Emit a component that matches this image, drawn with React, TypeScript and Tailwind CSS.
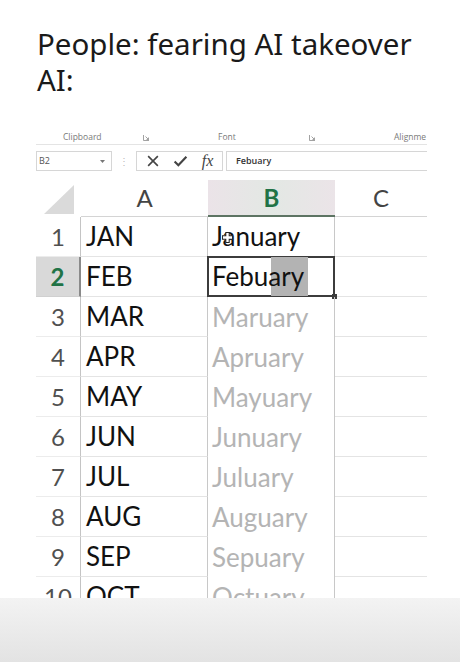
import React from "react";

const months = [
  { a: "JAN", b: "January" },
  { a: "FEB", b: "Febuary" },
  { a: "MAR", b: "Maruary" },
  { a: "APR", b: "Apruary" },
  { a: "MAY", b: "Mayuary" },
  { a: "JUN", b: "Junuary" },
  { a: "JUL", b: "Juluary" },
  { a: "AUG", b: "Auguary" },
  { a: "SEP", b: "Sepuary" },
  { a: "OCT", b: "Octuary" },
];

const cellFont = { fontFamily: "Lato, 'Open Sans', sans-serif" };

function Launcher() {
  return (
    <svg width="7" height="7" viewBox="0 0 7 7" className="text-[#8a8a8a]">
      <path d="M0.5 1v5.5H6" fill="none" stroke="currentColor" strokeWidth="0.8" />
      <path d="M2.5 2.5l3 3M5.5 3.5v2h-2" fill="none" stroke="currentColor" strokeWidth="0.8" />
    </svg>
  );
}

function Ribbon() {
  return (
    <div className="flex flex-col text-[#7a7a7a]" style={{ fontFamily: "'Open Sans', sans-serif" }}>
      <div className="relative h-[14px] border-b border-[#e4e4e4] text-[8.5px] leading-[12px]">
        <span className="absolute left-[27px] top-0">Clipboard</span>
        <span className="absolute left-[107px] top-[3px]"><Launcher /></span>
        <span className="absolute left-[182px] top-0">Font</span>
        <span className="absolute left-[273px] top-[3px]"><Launcher /></span>
        <span className="absolute left-[358px] top-0">Alignme</span>
      </div>
      <div className="mt-[6px] flex h-[20px] items-stretch">
        <div className="flex w-[76px] items-center justify-between border border-[#d6d6d6] pl-[2px] pr-[6px] text-[9px] text-[#555]">
          <span>B2</span>
          <svg width="5" height="3" viewBox="0 0 5 3"><path d="M0 0h5L2.5 3z" fill="#777" /></svg>
        </div>
        <div className="flex w-[24px] items-center justify-center text-[10px] leading-none text-[#bbb]">⋮</div>
        <div className="flex w-[87px] items-center justify-around border border-[#d6d6d6] px-[2px] text-[#444]">
          <svg width="14" height="14" viewBox="0 0 13 13">
            <path d="M2 2l9 9M11 2l-9 9" stroke="currentColor" strokeWidth="1.5" />
          </svg>
          <svg width="15" height="14" viewBox="0 0 14 13">
            <path d="M1.5 7l3.5 3.5L12.5 2.5" fill="none" stroke="currentColor" strokeWidth="2" />
          </svg>
          <span className="text-[16px] italic leading-none" style={{ fontFamily: "'Liberation Serif', serif" }}>
            fx
          </span>
        </div>
        <div className="ml-[3px] flex flex-1 items-center border border-r-0 border-[#d6d6d6] pl-[9px] text-[9px] font-semibold text-[#333]">
          Febuary
        </div>
      </div>
    </div>
  );
}

function HeaderRow() {
  return (
    <div className="flex h-[37px]">
      <div className="flex w-[45px] items-start justify-center pt-[5px]">
        <svg width="30" height="29" viewBox="0 0 30 29">
          <path d="M30 0v29H0z" fill="#dadada" />
        </svg>
      </div>
      <div
        className="flex w-[127px] items-center justify-center border-b border-[#d4d4d4] text-[24px] text-[#444]"
        style={cellFont}
      >
        A
      </div>
      <div
        className="flex w-[127px] items-center justify-center border-b-2 border-[#5d7463] bg-gradient-to-r from-[#ebe3e8] via-[#e3e8e4] to-[#ebe4e8] text-[24px] font-bold text-[#217346]"
        style={cellFont}
      >
        B
      </div>
      <div
        className="flex w-[92px] items-center justify-center border-b border-[#d4d4d4] text-[24px] text-[#444]"
        style={cellFont}
      >
        C
      </div>
    </div>
  );
}

function SheetRow({ n, a, b }: { n: number; a: string; b: string }) {
  const selected = n === 2;
  const filled = n <= 2;
  return (
    <div className="flex h-[40px] shrink-0">
      <div
        className={`flex w-[45px] items-center justify-center border-b border-r ${
          selected
            ? "border-b-[#d0d0d0] border-r-[#8a8a8a] border-r-2 bg-[#d9d9d9] font-bold text-[#217346]"
            : "border-b-[#ececec] border-r-[#c4c4c4] text-[#505050]"
        } text-[24px]`}
        style={cellFont}
      >
        {n}
      </div>
      <div
        className="flex w-[127px] items-center border-b border-r border-b-[#e4e4e4] border-r-[#c8c8c8] pl-[5px] text-[26px] text-[#111]"
        style={cellFont}
      >
        {a}
      </div>
      <div
        className={`relative flex w-[127px] items-center border-r border-r-[#c8c8c8] pl-[4px] text-[26px] ${
          filled ? "border-b border-b-[#e4e4e4] text-[#111]" : "text-[#b4b4b4]"
        }`}
        style={cellFont}
      >
        {selected ? (
          <>
            <span className="absolute inset-x-[-1px] inset-y-[-1px] border-2 border-[#3c3c3c]" />
            <span className="absolute left-[63px] top-0 h-full w-[37px] bg-[#b3b3b3]" />
            <span className="relative">{b}</span>
            <span className="absolute -bottom-[3px] -right-[3px] h-[5px] w-[5px] bg-[#3c3c3c]" />
          </>
        ) : (
          <span className="relative">{b}</span>
        )}
        {n === 1 && (
          /* fat-cross selection cursor */
          <svg className="absolute left-[14px] top-[15px]" width="11" height="11" viewBox="0 0 13 13">
            <path
              d="M4.5 0.5h4v4h4v4h-4v4h-4v-4h-4v-4h4z"
              fill="#fff"
              stroke="#222"
              strokeWidth="1.2"
            />
          </svg>
        )}
      </div>
      <div className="w-[92px] border-b border-b-[#e4e4e4]" />
    </div>
  );
}

export default function App() {
  return (
    <div className="flex h-[662px] w-[460px] flex-col overflow-hidden bg-white">
      {/* caption */}
      <div
        className="ml-[37px] mt-[26px] text-[29.5px] leading-[36px] text-[#1a1a1a]"
        style={{ fontFamily: "'Noto Sans', sans-serif" }}
      >
        <div>People: fearing AI takeover</div>
        <div>AI:</div>
      </div>

      {/* spreadsheet */}
      <div className="ml-[36px] mt-[33px] w-[391px]">
        <Ribbon />
      </div>
      <div className="ml-[36px] mt-[9px] flex h-[418px] w-[391px] flex-col overflow-hidden">
        <HeaderRow />
        {months.map((m, i) => (
          <SheetRow key={m.a} n={i + 1} a={m.a} b={m.b} />
        ))}
      </div>

      <div className="flex-1 bg-gradient-to-b from-[#f3f3f3] to-[#e3e3e3]" />
    </div>
  );
}
